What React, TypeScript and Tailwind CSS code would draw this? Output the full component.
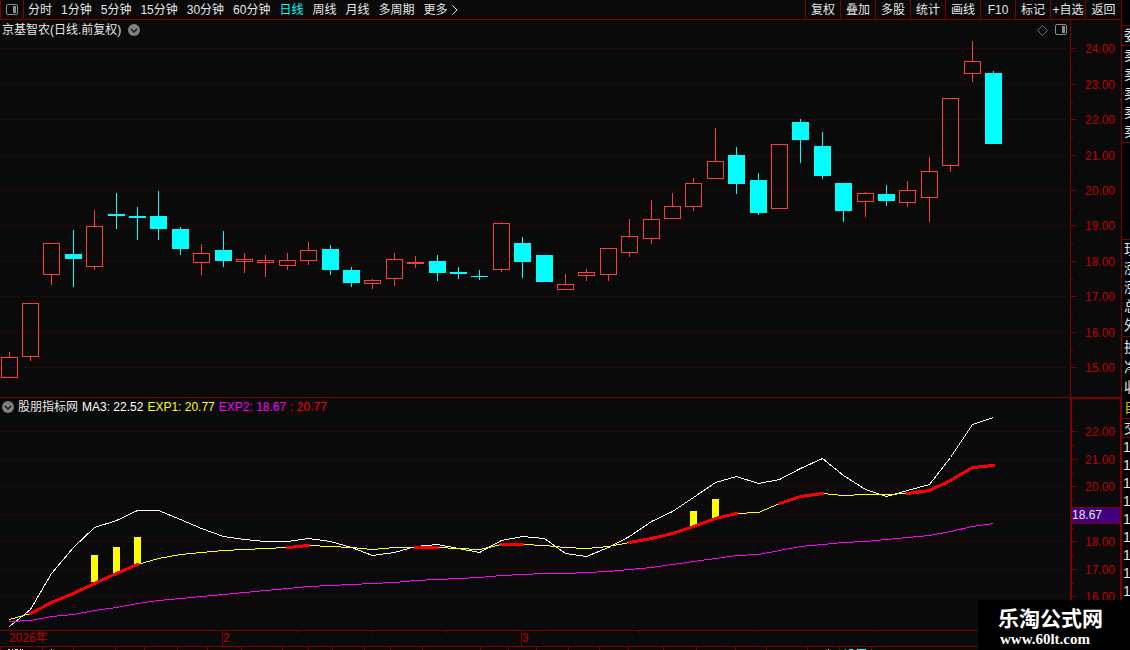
import React from "react";
import clsx from "clsx";

type Candle = {
  x: number;
  top: number;
  bottom: number;
  high: number;
  low: number;
  up: boolean;
};

type Point = [number, number];

// x, top, bottom, high, low, up(1) / down(0)
const CANDLES: Candle[] = [
  [1, 357, 378, 352, 378, 1],
  [22, 303, 357, 303, 361, 1],
  [43, 243, 275, 243, 285, 1],
  [65, 254, 259, 230, 287, 0],
  [86, 226, 267, 210, 270, 1],
  [108, 214, 216, 193, 229, 0],
  [129, 216, 218, 207, 240, 0],
  [150, 216, 229, 191, 240, 0],
  [172, 229, 249, 227, 255, 0],
  [193, 253, 263, 244, 275, 1],
  [215, 250, 261, 231, 267, 0],
  [236, 259, 262, 253, 273, 1],
  [257, 260, 263, 255, 277, 1],
  [279, 260, 266, 253, 270, 1],
  [300, 250, 261, 242, 265, 1],
  [322, 249, 270, 245, 275, 0],
  [343, 270, 283, 267, 287, 0],
  [364, 280, 284, 279, 289, 1],
  [386, 259, 279, 253, 286, 1],
  [407, 262, 264, 256, 268, 1],
  [429, 261, 273, 255, 281, 0],
  [450, 272, 274, 267, 279, 0],
  [471, 276, 277, 270, 280, 0],
  [493, 223, 270, 222, 272, 1],
  [514, 243, 262, 237, 278, 0],
  [536, 255, 282, 255, 282, 0],
  [557, 284, 290, 274, 290, 1],
  [578, 272, 276, 269, 281, 1],
  [600, 248, 275, 248, 281, 1],
  [621, 236, 253, 219, 257, 1],
  [643, 219, 239, 200, 244, 1],
  [664, 206, 219, 193, 219, 1],
  [685, 183, 207, 178, 211, 1],
  [707, 161, 179, 128, 179, 1],
  [728, 155, 184, 147, 194, 0],
  [750, 180, 213, 173, 215, 0],
  [771, 144, 209, 144, 209, 1],
  [792, 122, 140, 119, 163, 0],
  [814, 146, 176, 132, 179, 0],
  [835, 183, 211, 183, 222, 0],
  [857, 193, 202, 192, 217, 1],
  [878, 194, 201, 185, 206, 0],
  [899, 190, 203, 181, 207, 1],
  [921, 171, 198, 157, 222, 1],
  [942, 98, 166, 98, 172, 1],
  [964, 61, 74, 41, 82, 1],
  [985, 73, 144, 71, 144, 0],
].map(([x, top, bottom, high, low, up]) => ({
  x,
  top,
  bottom,
  high,
  low,
  up: up === 1,
}));

const MA3 = [
  626, 609, 573, 547, 527, 520, 510, 510, 519, 528, 536, 539, 541, 541, 538,
  541, 547, 555, 552, 546, 544, 548, 552, 540, 536, 538, 553, 556, 547, 536,
  521, 511, 497, 482, 476, 483, 479, 468, 458, 475, 489, 496, 490, 484, 457,
  424, 417,
];

const EXP1 = [
  619, 613, 602, 593, 583, 573, 564, 558, 554, 552, 550, 549, 548, 547, 545,
  546, 547, 549, 547, 547, 547, 548, 549, 544, 544, 545, 547, 548, 546, 542,
  538, 533, 526, 518, 513, 512, 503, 496, 493, 495, 494, 494, 493, 490, 480,
  467, 465,
];

const EXP2 = [
  621, 620, 616, 614, 610, 607, 603, 600, 598, 596, 594, 592, 590, 588, 586,
  585, 584, 583, 582, 580, 579, 578, 577, 575, 574, 573, 573, 572, 571, 569,
  567, 564, 561, 558, 555, 554, 550, 546, 544, 542, 541, 539, 537, 535, 531,
  526, 523,
];

// index ranges where EXP1 is drawn as the thick red trend
const TRENDS = [
  [1, 6],
  [13, 14],
  [19, 20],
  [23, 24],
  [29, 34],
  [36, 38],
  [42, 46],
];

const SIGNALS = [
  { x: 91, top: 555, bottom: 582 },
  { x: 113, top: 547, bottom: 573 },
  { x: 134, top: 537, bottom: 564 },
  { x: 690, top: 511, bottom: 527 },
  { x: 712, top: 499, bottom: 519 },
];

const PRICE_TICKS = [48, 84, 119, 155, 190, 225, 261, 296, 332, 367];
const PRICE_MINOR = [66, 102, 137, 173, 208, 243, 279, 314, 350];
const INDICATOR_TICKS = [431, 459, 486, 514, 541, 569, 596];
const INDICATOR_MINOR = [445, 473, 500, 528, 555, 583];
// the current value tag sits on this tick, so it gets no label
const TAGGED_TICK = 514;

const PERIODS = [
  "分时",
  "1分钟",
  "5分钟",
  "15分钟",
  "30分钟",
  "60分钟",
  "日线",
  "周线",
  "月线",
  "多周期",
];

const ACTIONS = ["复权", "叠加", "多股", "统计", "画线", "F10", "标记", "+自选", "返回"];

const FOOTER_TABS = [
  0, 42, 73, 115, 144, 177, 207, 241, 282, 308, 332, 364, 390, 422, 480, 508,
  536, 568, 599, 628, 663, 696, 735, 766, 807, 839, 871,
];

const toPoints = (values: number[], from = 0, to = values.length - 1) =>
  values
    .map((y, i): Point => [CANDLES[i].x + 8, y])
    .slice(from, to + 1)
    .map(([x, y]) => `${x + 0.5},${y + 0.5}`)
    .join(" ");

const PanelIcon = () => (
  <svg width="12" height="12" viewBox="0 0 12 12" fill="none">
    <rect x="0.5" y="0.5" width="11" height="10" rx="1.5" stroke="#8c8c8c" />
    <rect x="7" y="2" width="3" height="7" fill="#8c8c8c" />
  </svg>
);

const CollapseIcon = () => (
  <svg width="12" height="12" viewBox="0 0 12 12" fill="none">
    <circle cx="6" cy="6" r="6" fill="#808080" />
    <path d="M3 5l3 3 3-3" stroke="#1a1a1a" strokeWidth="1.5" />
  </svg>
);

const DiamondIcon = () => (
  <svg width="11" height="11" viewBox="0 0 11 11" fill="none">
    <path d="M5.5 0.5l5 5-5 5-5-5z" stroke="#707070" />
  </svg>
);

const GridLines = ({ rows }: { rows: number[] }) => (
  <g stroke="#780000" strokeDasharray="1 3" shapeRendering="crispEdges">
    {rows.map((y) => (
      <line key={y} x1="1" x2="1067" y1={y + 0.5} y2={y + 0.5} />
    ))}
  </g>
);

const AxisTicks = ({ major, minor }: { major: number[]; minor: number[] }) => (
  <g fill="#800000" shapeRendering="crispEdges">
    {major.map((y) => (
      <rect key={y} x="0" y={y} width="5" height="1" />
    ))}
    {minor.map((y) => (
      <rect key={y} x="0" y={y} width="2" height="1" />
    ))}
  </g>
);

const CandleShape = ({ candle }: { candle: Candle }) => {
  const { x, top, bottom, high, low, up } = candle;
  const color = up ? "#ff3c3c" : "#00ffff";
  return (
    <g fill={color}>
      <rect x={x + 8} y={high} width="1" height={top - high} />
      <rect x={x + 8} y={bottom} width="1" height={low - bottom} />
      {up ? (
        <rect
          x={x + 0.5}
          y={top + 0.5}
          width="16"
          height={bottom - top - 1}
          fill="none"
          stroke={color}
        />
      ) : (
        <rect x={x} y={top} width="17" height={bottom - top} />
      )}
    </g>
  );
};

const Toolbar = () => (
  <header className="flex h-5 items-stretch border-b border-[#800000] text-[#e6e6e6]">
    <button
      type="button"
      aria-label="切换侧栏"
      className="flex w-6 items-center justify-center border-x border-[#800000]"
    >
      <PanelIcon />
    </button>
    <nav className="flex flex-1 items-center gap-[9px] overflow-hidden pl-1 whitespace-nowrap">
      {PERIODS.map((period) => (
        <button
          type="button"
          key={period}
          className={clsx(period === "日线" && "text-[#00ffff]")}
        >
          {period}
        </button>
      ))}
      <button type="button" className="flex items-center gap-1">
        更多
        <svg width="6" height="10" viewBox="0 0 6 10" fill="none">
          <path d="M0.5 0.5L5 5 0.5 9.5" stroke="#e6e6e6" />
        </svg>
      </button>
    </nav>
    <div className="flex whitespace-nowrap">
      {ACTIONS.map((action) => (
        <button
          type="button"
          key={action}
          className="flex w-[35px] items-center justify-center border-l border-[#800000] last:w-9"
        >
          {action}
        </button>
      ))}
    </div>
  </header>
);

const PricePane = () => (
  <section className="flex border-b border-[#800000]">
    <div className="min-w-0 flex-1">
      <div className="flex h-5 items-center gap-[7px] pr-[3px] pl-[2px] text-[#e6e6e6]">
        <h1 className="flex items-center gap-[7px]">
          京基智农(日线.前复权)
          <CollapseIcon />
        </h1>
        <span className="flex-1" />
        <DiamondIcon />
        <PanelIcon />
      </div>
      <svg
        className="block h-[357px] w-full"
        viewBox="0 40 1070 357"
        preserveAspectRatio="none"
      >
        <GridLines rows={PRICE_TICKS} />
        <g shapeRendering="crispEdges">
          {CANDLES.map((candle) => (
            <CandleShape key={candle.x} candle={candle} />
          ))}
        </g>
      </svg>
    </div>
    <div className="w-[51px] border-l border-[#800000]">
      <svg className="block" width="50" height="377" viewBox="0 20 50 377">
        <AxisTicks major={PRICE_TICKS} minor={PRICE_MINOR} />
        {PRICE_TICKS.map((y, i) => (
          <text key={y} x="44" y={y + 5} textAnchor="end" fill="#c00000">
            {(24 - i).toFixed(2)}
          </text>
        ))}
      </svg>
    </div>
  </section>
);

const IndicatorPane = () => (
  <section className="flex">
    <div className="min-w-0 flex-1">
      <div className="flex h-[18px] items-center gap-1 pl-[2px] whitespace-nowrap">
        <h2 className="flex items-center gap-1 text-[#e6e6e6]">
          <CollapseIcon />
          股朋指标网
        </h2>
        <span className="text-white">MA3: 22.52</span>
        <span className="text-[#ffff00]">EXP1: 20.77</span>
        <span className="text-[#ff00ff]">EXP2: 18.67</span>
        <span className="text-[#ff0000]">: 20.77</span>
      </div>
      <svg
        className="block h-[214px] w-full"
        viewBox="0 416 1070 214"
        preserveAspectRatio="none"
      >
        <GridLines rows={INDICATOR_TICKS} />
        <g fill="none" shapeRendering="crispEdges">
          {SIGNALS.map(({ x, top, bottom }) => (
            <rect
              key={x}
              x={x}
              y={top}
              width="7"
              height={bottom - top}
              fill="#ffff00"
            />
          ))}
          <polyline points={toPoints(MA3)} stroke="#ffffff" />
          <polyline points={toPoints(EXP1)} stroke="#ffff00" />
          <polyline points={toPoints(EXP2)} stroke="#ff00ff" />
          {TRENDS.map(([from, to]) => (
            <polyline
              key={from}
              points={toPoints(EXP1, from, to)}
              stroke="#ff0000"
              strokeWidth="3"
              strokeLinecap="square"
              strokeLinejoin="round"
            />
          ))}
        </g>
      </svg>
    </div>
    <div className="w-[51px] border-t border-r border-l-2 border-[#800000]">
      <svg className="block" width="48" height="231" viewBox="0 399 48 231">
        <AxisTicks major={INDICATOR_TICKS} minor={INDICATOR_MINOR} />
        {INDICATOR_TICKS.map(
          (y, i) =>
            y !== TAGGED_TICK && (
              <text key={y} x="43" y={y + 5} textAnchor="end" fill="#c00000">
                {(22 - i).toFixed(2)}
              </text>
            ),
        )}
        <rect x="0" y="507" width="48" height="17" fill="#800000" />
        <rect x="0" y="508" width="48" height="15" fill="#400080" />
        <text x="0" y="519" fill="#e6e6e6">
          18.67
        </text>
      </svg>
    </div>
  </section>
);

const DateAxis = () => (
  <div className="relative flex h-[17px] items-stretch border-y border-[#800000] leading-[15px] text-[#c00000]">
    <svg
      className="absolute top-0 left-0"
      width="978"
      height="2"
      viewBox="0 0 978 2"
      fill="#800000"
    >
      {[297, 372, 446, 639, 757, 874].map((x) => (
        <rect key={x} x={x} y="0" width="1" height="2" />
      ))}
    </svg>
    <span className="w-[222px] pl-[9px]">2026年</span>
    <span className="w-[299px] border-l border-[#800000]">2</span>
    <span className="flex-1 border-l border-[#800000]">3</span>
  </div>
);

const FooterEdge = () => (
  <svg
    className="block"
    width="978"
    height="3"
    viewBox="0 0 978 3"
    shapeRendering="crispEdges"
  >
    {FOOTER_TABS.map((x) => (
      <rect key={x} x={x} y="0" width="1" height="3" fill="#800000" />
    ))}
    <path
      d="M8 2.5h2M12 2.5h1M15 2.5h3M20 2.5h1M22 2.5h1M51 2.5h1M828 2.5h1"
      stroke="#e6e6e6"
    />
    <path d="M845 2.5h1M849 2.5h4M857 2.5h9" stroke="#00ffff" />
  </svg>
);

const QuoteStrip = () => (
  <aside className="w-[9px] shrink-0 overflow-hidden border-l border-[#800000] bg-black text-sm text-[#e6e6e6]">
    <div className="h-[26px] border-b border-[#800000]" />
    <div className="h-5 border-b border-[#800000] pl-[2px] leading-[19px]">
      委
    </div>
    <div className="h-[97px] border-b border-[#800000] pl-[2px] leading-[19px]">
      {[5, 4, 3, 2, 1].map((level) => (
        <div key={level}>卖</div>
      ))}
    </div>
    <div className="h-[97px] border-b border-[#800000]" />
    <div className="h-[97px] border-b border-[#800000] pl-[2px] leading-[19px]">
      <div>现</div>
      <div>涨</div>
      <div>涨</div>
      <div>总</div>
      <div>外</div>
    </div>
    <div className="h-[82px] border-b border-[#800000] pl-[2px] leading-5">
      <div>换</div>
      <div>净</div>
      <div>收</div>
      <div className="text-[#c8c800]">自</div>
    </div>
    <div className="h-[19px] border-b border-[#800000] pl-[2px] leading-[18px]">
      交
    </div>
    <div className="pl-px leading-[18px]">
      {[447, 465, 483, 501, 519, 537, 555, 573, 591].map((row) => (
        <div key={row}>1</div>
      ))}
    </div>
  </aside>
);

const Watermark = () => (
  <div className="absolute right-0 bottom-0 flex h-[50px] w-[152px] flex-col bg-black pt-2 pl-5 font-bold whitespace-nowrap text-white">
    <span className="text-[21px] leading-[22px]">乐淘公式网</span>
    <span className="pl-[2px] font-['Liberation_Serif',serif] text-[15px] leading-[18px]">
      www.60lt.com
    </span>
  </div>
);

export default function App() {
  return (
    <div className="relative flex min-h-screen overflow-hidden bg-[#0a0a0a] font-['Liberation_Sans','Noto_Sans_CJK_SC',sans-serif] text-xs">
      <main className="min-w-0 flex-1">
        <Toolbar />
        <PricePane />
        <IndicatorPane />
        <DateAxis />
        <FooterEdge />
      </main>
      <QuoteStrip />
      <Watermark />
    </div>
  );
}
